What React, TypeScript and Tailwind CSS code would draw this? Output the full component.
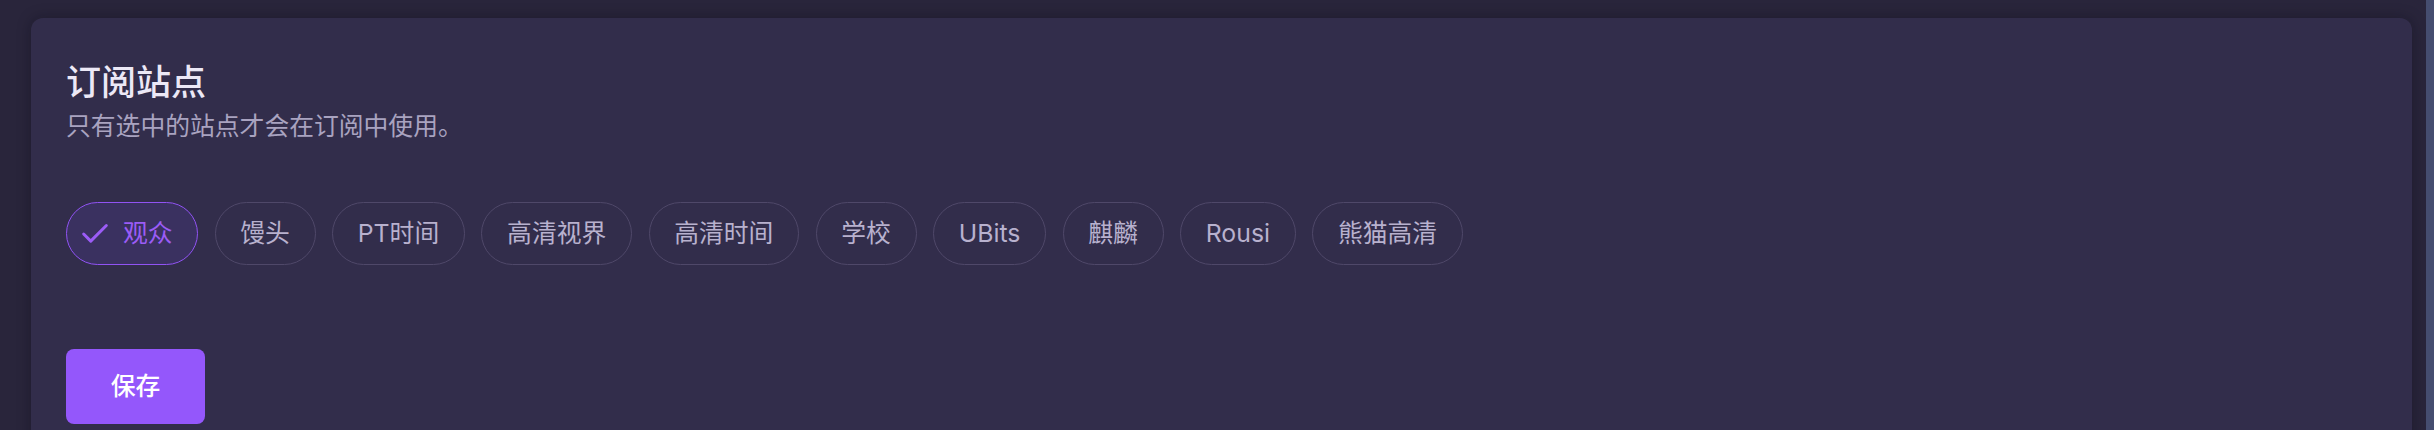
import React, { useState } from 'react';

const SITES = ['观众', '馒头', 'PT时间', '高清视界', '高清时间', '学校', 'UBits', '麒麟', 'Rousi', '熊猫高清']

const FONT = "font-['Inter','Noto_Sans_CJK_SC',sans-serif]"

const CheckIcon = () => (
  <svg width="34" height="34" viewBox="0 0 24 24" fill="none" stroke="currentColor" strokeWidth="2.1" strokeLinecap="round" strokeLinejoin="round">
    <path d="M20 6 9 17l-5-5" />
  </svg>
)

export default function App() {
  const [selected, setSelected] = useState<Set<string>>(new Set(['观众']))

  const toggle = (name: string) => {
    setSelected(prev => {
      const next = new Set(prev)
      if (next.has(name)) next.delete(name)
      else next.add(name)
      return next
    })
  }

  return (
    <div className={`flex h-[430px] w-full overflow-hidden bg-[#29253b] ${FONT}`}>
      <div className="flex-1 pl-[31px] pr-[14px] pt-[18px]">
        <div className="h-[500px] rounded-[12px] bg-[#322d4b] px-[35px] pt-[43px] shadow-[0_0_14px_rgba(10,8,20,0.35)]">
          {/* Header */}
          <h2 className="text-[35px] leading-[43px] font-medium text-[#ece8f6]">订阅站点</h2>
          <p className="mt-[4px] text-[24.8px] leading-[37px] text-[#a9a3c0]">只有选中的站点才会在订阅中使用。</p>

          {/* Site chips */}
          <div className="mt-[57px] flex flex-wrap gap-[16.5px]">
            {SITES.map(name => {
              const isOn = selected.has(name)
              return (
                <button
                  key={name}
                  onClick={() => toggle(name)}
                  className={`flex h-[63px] items-center rounded-full border-[1.5px] text-[24.8px] leading-[37px] ${
                    isOn
                      ? 'border-[#9153f4] bg-[#3a3160] pl-[11px] pr-[24.5px] text-[#9b5cf6] gap-[11px]'
                      : 'border-[#4f4869] px-[24.7px] text-[#b8b1ce]'
                  }`}
                >
                  {isOn && <CheckIcon />}
                  <span>{name}</span>
                </button>
              )
            })}
          </div>

          {/* Actions */}
          <button className="mt-[84px] h-[75px] w-[139px] rounded-[8px] bg-[#9457fb] text-[24.8px] font-medium text-white">
            保存
          </button>
        </div>
      </div>
      <div className="w-[8px] bg-[#454d6f]" />
    </div>
  )
}
